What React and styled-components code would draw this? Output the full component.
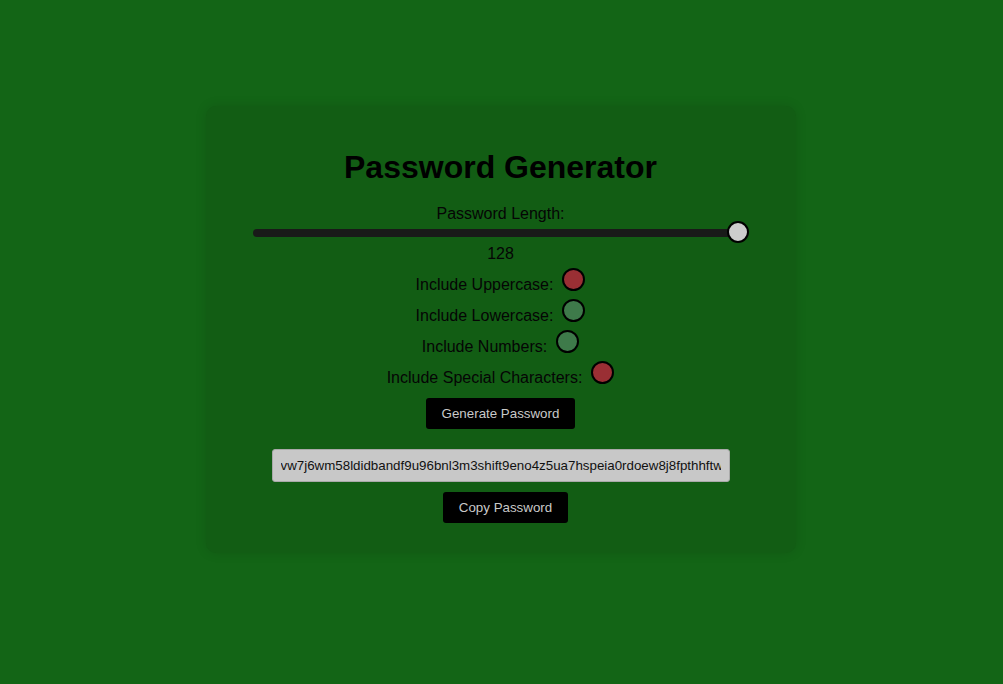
import React, { useState } from "react";
import styled, { createGlobalStyle } from "styled-components";

const Global = createGlobalStyle`
  html, body { margin: 0; padding: 0; }
  body {
    background: #136516;
    font-family: "Liberation Sans", Arial, sans-serif;
    color: #050505;
  }
`;

const Page = styled.div`
  min-height: 684px;
  display: flex;
  justify-content: center;
  align-items: flex-start;
  padding-top: 106px;
  box-sizing: border-box;
`;

const Card = styled.div`
  width: 590px;
  height: 447px;
  box-sizing: border-box;
  background: #125d14;
  border-radius: 10px;
  box-shadow: 0 0 12px rgba(0, 0, 0, 0.12);
  padding-top: 43px;
  display: flex;
  flex-direction: column;
  align-items: center;
  margin-left: -2px;
`;

const Title = styled.h1`
  margin: 0;
  font-size: 32px;
  line-height: 37px;
  font-weight: 700;
  color: #000;
`;

const Label = styled.div`
  margin-top: ${(p) => p.$mt || 0}px;
  font-size: 16px;
  line-height: 18px;
  color: #050505;
`;

const SliderWrap = styled.div`
  position: relative;
  width: 495px;
  height: 20px;
  display: flex;
  align-items: center;
`;

const Track = styled.div`
  width: 100%;
  height: 8px;
  border-radius: 4px;
  background: #191a19;
`;

const Thumb = styled.div`
  position: absolute;
  left: 474px;
  top: -2px;
  width: 18px;
  height: 18px;
  border-radius: 50%;
  background: #cdcdcd;
  border: 2px solid #000;
`;

const Rows = styled.div`
  margin-top: 6px;
  display: flex;
  flex-direction: column;
  align-items: center;
`;

const Row = styled.label`
  height: 31px;
  display: flex;
  align-items: center;
  font-size: 16px;
  color: #050505;
  gap: 9px;
`;

const Dot = styled.span`
  width: 19px;
  height: 19px;
  border-radius: 50%;
  border: 2px solid #000;
  background: ${(p) => (p.$on ? "#3e7a4a" : "#9a2f34")};
  transform: translateY(-5px);
`;

const Button = styled.button`
  margin-top: ${(p) => p.$mt}px;
  margin-left: ${(p) => p.$ml || 0}px;
  height: 31px;
  padding: 0 16px;
  border: none;
  border-radius: 3px;
  background: #000;
  color: #c9c9c9;
  font-family: "Liberation Sans", Arial, sans-serif;
  font-size: 13.33px;
`;

const Output = styled.input`
  margin-top: 20px;
  width: 458px;
  height: 33px;
  box-sizing: border-box;
  border: 1px solid #a9a9a9;
  border-radius: 3px;
  background: #c8c8c8;
  color: #111;
  padding: 0 8px;
  font-family: "Liberation Sans", Arial, sans-serif;
  font-size: 13.33px;
  outline: none;
`;

const options = [
  { label: "Include Uppercase:", on: false },
  { label: "Include Lowercase:", on: true },
  { label: "Include Numbers:", on: true },
  { label: "Include Special Characters:", on: false },
];

export default function App() {
  const [pw] = useState(
    "vw7j6wm58ldidbandf9u96bnl3m3shift9eno4z5ua7hspeia0rdoew8j8fpthhftw2k"
  );
  return (
    <>
      <Global />
      <Page>
        <Card>
          <Title>Password Generator</Title>
          <Label $mt={19}>Password Length:</Label>
          <SliderWrap>
            <Track />
            <Thumb />
          </SliderWrap>
          <Label $mt={2}>128</Label>
          <Rows>
            {options.map((o) => (
              <Row key={o.label}>
                {o.label}
                <Dot $on={o.on} />
              </Row>
            ))}
          </Rows>
          <Button $mt={5}>Generate Password</Button>
          <Output readOnly value={pw} />
          <Button $mt={10} $ml={10}>Copy Password</Button>
        </Card>
      </Page>
    </>
  );
}
